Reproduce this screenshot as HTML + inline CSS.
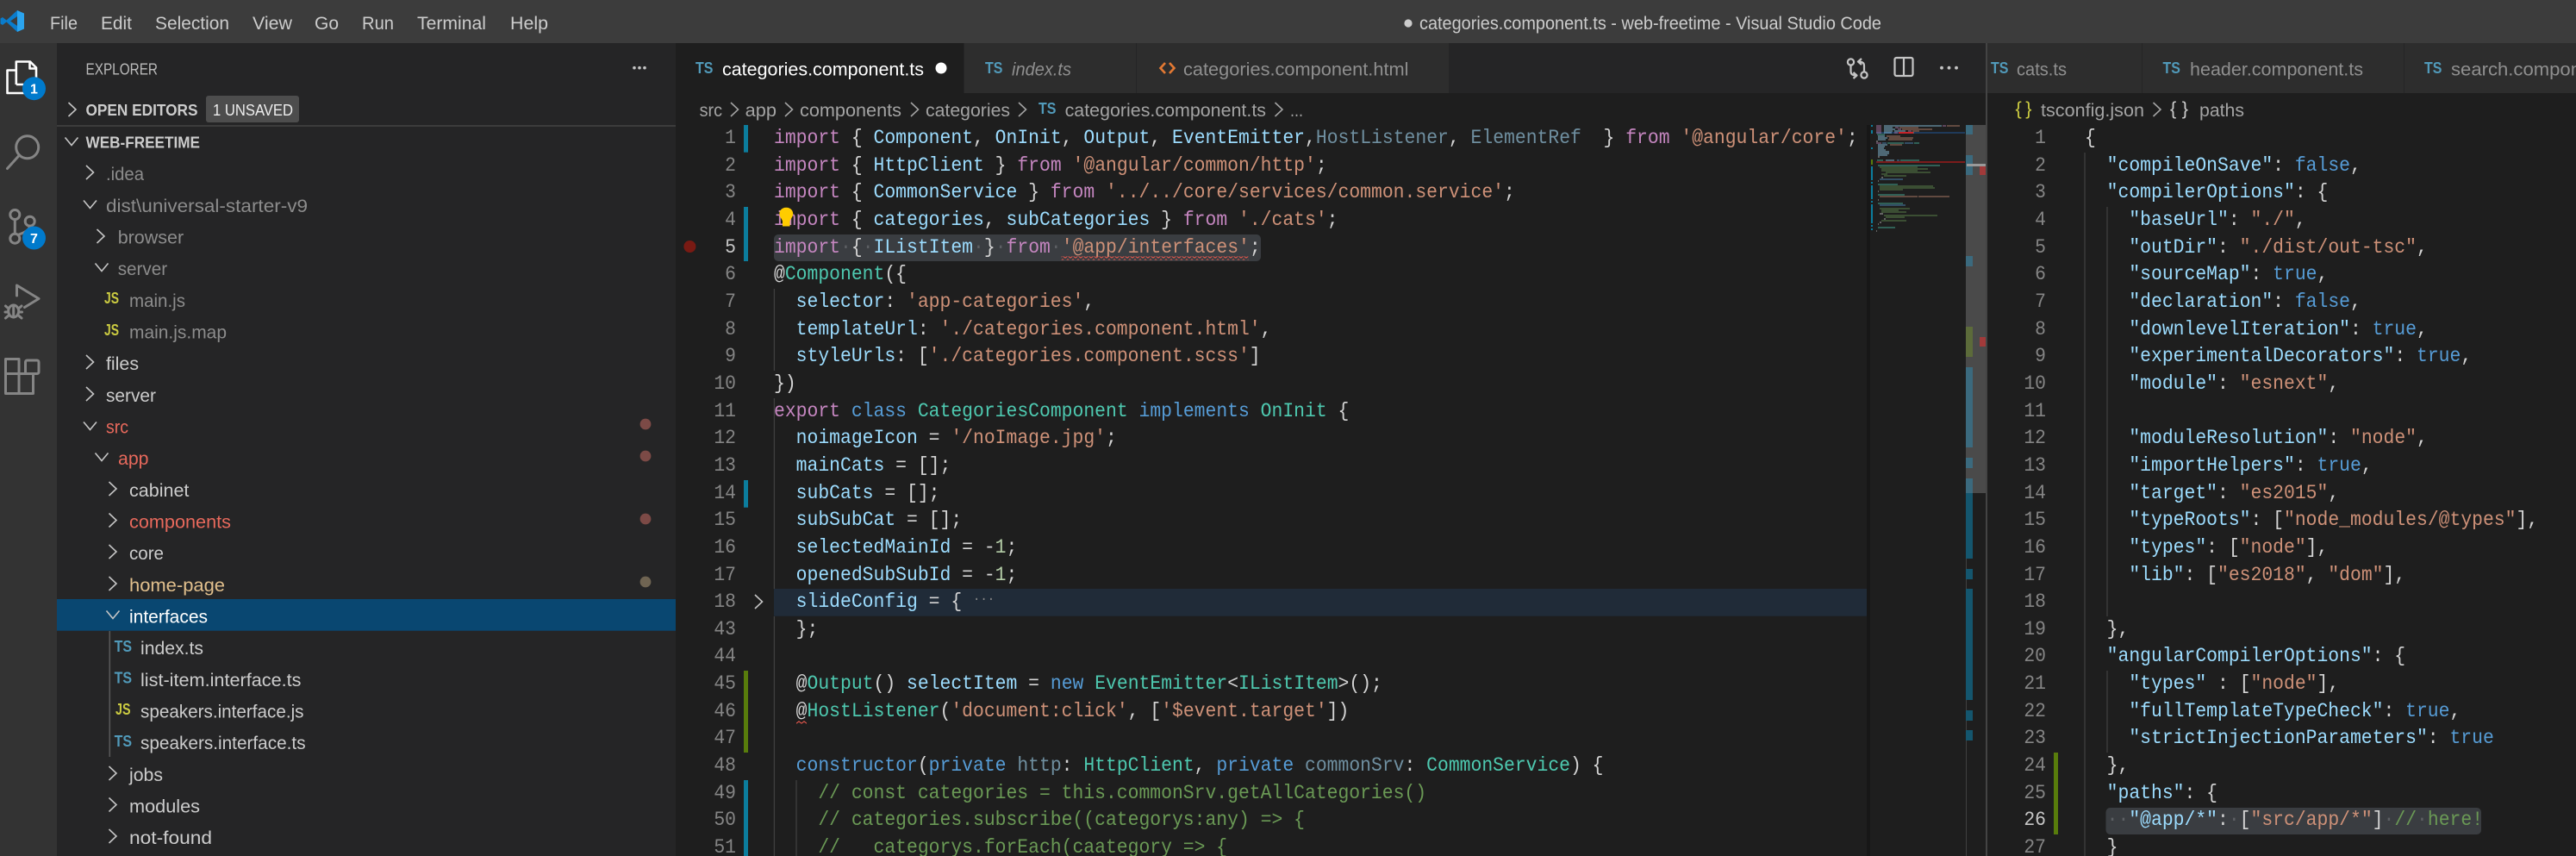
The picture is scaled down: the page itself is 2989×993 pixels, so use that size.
<!DOCTYPE html>
<html><head><meta charset="utf-8"><title>VS Code</title>
<style>
html,body{margin:0;padding:0;background:#1e1e1e;overflow:hidden;width:2989px;height:993px}
#p{position:relative;width:2989px;height:993px;overflow:hidden;background:#1e1e1e}
svg{position:absolute;left:0;top:0}
svg text{font-family:"Liberation Sans",sans-serif;font-size:21.67px;fill:#ccc}
text.h{font-size:18.33px}
text.b{font-size:18.33px;font-weight:bold}
text.d{fill:#8c8c8c}
text.e{fill:#e8695c}
text.y{fill:#e2c08d}
text.c{fill:#a3a3a3}
text.g{fill:#8f8f8f}
text.ts{font-size:18.5px;fill:#519aba;font-weight:bold}
text.js{font-size:18.5px;fill:#cbcb41;font-weight:bold}
.code,.num{position:absolute;font-family:"Liberation Mono",monospace;font-size:23px;line-height:31.67px;color:#d4d4d4;transform:scaleX(.9297)}
.code{transform-origin:0 0;top:145px;height:848px;overflow:hidden;width:1400px}
.code div,.num div{height:31.67px;white-space:pre}
.num{top:145px;height:848px;overflow:hidden;text-align:right;width:60px;color:#858585;transform-origin:100% 0}
.num .a{color:#c6c6c6}
.k{color:#c586c0}.b{color:#569cd6}.t{color:#4ec9b0}.v{color:#9cdcfe}.s{color:#ce9178}.c{color:#6a9955}.n{color:#b5cea8}.f{color:#6f8fa0}.w{color:#5c5f63}
</style></head><body><div id="p">
<svg width="2989" height="993" viewBox="0 0 2989 993" fill="none">
<defs>
<path id="r" d="M0 -8L8.5 0L0 8"/>
<path id="dn" d="M-7.5 -4.5L0 4.5L7.5 -4.5"/>
</defs>
<!-- regions -->
<rect width="2989" height="50" fill="#3c3c3c"/>
<rect y="50" width="66" height="943" fill="#333333"/>
<rect x="66" y="50" width="718" height="943" fill="#252526"/>
<rect x="784" y="50" width="2205" height="58" fill="#252526"/>
<rect x="784" y="50" width="334" height="58" fill="#1e1e1e"/>
<rect x="1119" y="50" width="199" height="58" fill="#2d2d2d"/>
<rect x="1319" y="50" width="362" height="58" fill="#2d2d2d"/>
<rect x="2306" y="50" width="179" height="58" fill="#2d2d2d"/>
<rect x="2486" y="50" width="303" height="58" fill="#2d2d2d"/>
<rect x="2790" y="50" width="199" height="58" fill="#2d2d2d"/>
<rect x="2304" y="50" width="2" height="943" fill="#444"/>
<!-- sidebar extras -->
<rect x="66" y="145" width="718" height="2" fill="#3c3c3c"/>
<rect x="66" y="695" width="718" height="36.7" fill="#094771"/>
<rect x="126.5" y="732" width="1.6" height="146" fill="#585858"/>
<rect x="239" y="111" width="108" height="31" rx="3" fill="#4d4d4d"/>
<circle cx="749" cy="492" r="6.4" fill="#7c4a46"/><circle cx="749" cy="529" r="6.4" fill="#7c4a46"/><circle cx="749" cy="602" r="6.4" fill="#7c4a46"/><circle cx="749" cy="675" r="6.4" fill="#6f6452"/>
<circle cx="736" cy="78.7" r="1.8" fill="#c5c5c5"/><circle cx="742" cy="78.7" r="1.8" fill="#c5c5c5"/><circle cx="748" cy="78.7" r="1.8" fill="#c5c5c5"/>
<!-- left editor decor -->
<rect x="898" y="683" width="1272" height="31.7" fill="#202b38"/>
<rect x="898" y="272" width="565" height="31" rx="5" fill="#3a3d41"/>
<rect x="863" y="145" width="5" height="31.7" fill="#0c7d9d"/>
<rect x="863" y="240" width="5" height="63" fill="#0c7d9d"/>
<rect x="863" y="557" width="5" height="31.7" fill="#0c7d9d"/>
<rect x="863" y="778" width="5" height="95" fill="#587c0c"/>
<rect x="863" y="905" width="5" height="88" fill="#0c7d9d"/>
<circle cx="800.4" cy="286" r="7" fill="#791a13"/>
<g stroke="#3f3f3f" stroke-width="1.3">
<path d="M898.4 335V430M898.4 462V683M898.4 715V993M924 905V993"/>
<path d="M2419 177V993M2445 240V715M2445 778V873"/>
</g>
<g stroke="#c5c5c5" stroke-width="1.6"><use href="#r" x="876" y="698"/></g>
<!-- minimap -->
<rect x="2166" y="145" width="4" height="848" fill="#171717"/>
<rect x="2177" y="153" width="103" height="2" fill="#1f3a5a"/>
<g stroke-width="1.3" opacity=".62">
<path stroke="#c586c0" d="M2177 146h6M2254 146h4M2177 148h6M2199 148h4M2177 150h6M2202 150h4M2177 152h6M2214 152h4M2177 154h6M2198 154h4M2177 166h6"/>
<path stroke="#9cdcfe" d="M2186 146h40M2226 146h27M2186 148h10M2186 150h13M2186 152h10M2198 152h13M2186 154h9M2179 158h8M2179 160h11M2179 162h9M2179 168h11M2179 170h8M2179 172h7M2179 174h9M2179 176h13M2179 178h13M2179 180h11M2188 186h10"/>
<path stroke="#ce9178" d="M2259 146h15M2204 148h22M2207 150h35M2219 152h8M2203 154h18M2189 158h16M2192 160h28M2191 162h28M2193 168h14M2181 228h44M2226 228h36"/>
<path stroke="#4ec9b0" d="M2178 156h9M2190 166h19M2221 166h6M2178 186h7M2205 186h22M2179 192h72M2179 214h23M2179 226h31M2179 236h29M2179 264h20"/>
<path stroke="#569cd6" d="M2184 166h5M2210 166h10M2201 186h3M2181 208h27M2181 238h30"/>
<path stroke="#6a9955" d="M2181 194h44M2183 196h54M2183 198h42M2188 200h52M2183 202h7M2186 204h26M2181 216h62M2181 218h64M2181 220h27M2181 242h35M2183 244h20M2183 246h29M2186 250h62M2188 252h22M2183 256h29"/>
<path stroke="#d4d4d4" d="M2177 164h2M2179 182h2M2183 206h2M2179 210h1M2179 222h1M2179 232h1M2181 248h4M2186 254h2M2181 258h2M2179 260h1M2177 268h1"/>
</g>
<rect x="2203" y="153" width="17" height="2" fill="#c8242b"/>
<rect x="2177" y="187" width="103" height="2" fill="#7c1c1c"/>
<g fill="#0c7d9d">
<rect x="2171" y="145" width="2" height="2"/><rect x="2171" y="151" width="2" height="4"/><rect x="2171" y="171" width="2" height="2"/><rect x="2171" y="193" width="2" height="16"/><rect x="2171" y="211" width="2" height="2"/><rect x="2171" y="215" width="2" height="16"/><rect x="2171" y="233" width="2" height="2"/><rect x="2171" y="237" width="2" height="22"/><rect x="2171" y="261" width="2" height="2"/><rect x="2171" y="265" width="2" height="2"/>
</g>
<rect x="2171" y="185" width="2" height="6" fill="#587c0c"/>
<!-- overview ruler -->
<rect x="2281" y="145" width="1" height="848" fill="#404040"/>
<rect x="2281" y="145" width="23" height="427" fill="#4a4a4a"/>
<g fill="#3b6a7e">
<rect x="2281" y="145" width="8" height="11"/><rect x="2281" y="180" width="8" height="23"/><rect x="2281" y="297" width="8" height="12"/><rect x="2281" y="426" width="8" height="93"/><rect x="2281" y="531" width="8" height="12"/><rect x="2281" y="555" width="8" height="17"/>
</g>
<rect x="2281" y="379" width="8" height="35" fill="#5c6b3a"/>
<g fill="#14566e">
<rect x="2281" y="572" width="8" height="76"/><rect x="2281" y="660" width="8" height="12"/><rect x="2281" y="683" width="8" height="129"/><rect x="2281" y="824" width="8" height="12"/><rect x="2281" y="847" width="8" height="12"/>
</g>
<rect x="2297" y="192" width="7" height="11" fill="#a13a3a"/><rect x="2297" y="391" width="7" height="11" fill="#a13a3a"/>
<rect x="2282" y="190" width="22" height="3" fill="#9a9a9a"/>
<!-- right editor decor -->
<rect x="2383" y="873" width="5" height="95" fill="#587c0c"/>
<rect x="2443.5" y="937" width="435.5" height="31" rx="5" fill="#3a3d41"/>
<!-- logo -->
<path d="M20 12L28 15.5V33.5L20 37Z" fill="#2ba4ee"/>
<path d="M20 12L7.5 23.5L3 20L.5 21.5V27.5L3 29L7.5 25.5L20 37V30L12 24.5L20 19Z" fill="#0a7ccc"/>
<!-- activity icons -->
<g stroke="#fff" stroke-width="2.6" stroke-linejoin="round"><path d="M18.8 98V71.5H35L42 78.5V98H18.8"/><path d="M34.5 71.5V79.5H42"/><path d="M18 81.5H8.5V108H38V98"/></g>
<g stroke="#858585" stroke-width="3" stroke-linecap="round">
<circle cx="31.7" cy="170.7" r="13"/><path d="M22.5 180L8.5 195.5"/>
<circle cx="17.3" cy="249" r="5.5"/><circle cx="34.7" cy="256.7" r="5.5"/><circle cx="17.3" cy="276.7" r="5.5"/><path d="M17.3 254.5V271M34.7 262Q34 268 22 272"/>
<path d="M19.5 343V331L45 346.5L28.5 356.5" stroke-linejoin="round"/>
<ellipse cx="15.7" cy="361" rx="6" ry="7"/><path d="M6.5 355L10 358M25 355L21.5 358M6 362H9.5M25.5 362H22M6.5 369L10 366M25 369L21.5 366M15.7 354V368"/>
<rect x="29.5" y="418" width="15.5" height="15.5" rx="2"/><path d="M6.5 416.5H22V456.5M6.5 416.5V456.5H38.5V433.5H6.5" stroke-linejoin="round"/>
</g>
<circle cx="39.5" cy="102.7" r="13.5" fill="#007acc"/><circle cx="39.5" cy="276" r="13.5" fill="#007acc"/>
<text class="b" x="39.5" y="108.5" text-anchor="middle" style="fill:#fff;font-size:16px">1</text>
<text class="b" x="39.5" y="281.8" text-anchor="middle" style="fill:#fff;font-size:16px">7</text>
<!-- menu + title -->
<g style="fill:#ccc">
<text x="58" y="34" textLength="32" lengthAdjust="spacingAndGlyphs">File</text>
<text x="117" y="34" textLength="36" lengthAdjust="spacingAndGlyphs">Edit</text>
<text x="180" y="34" textLength="86" lengthAdjust="spacingAndGlyphs">Selection</text>
<text x="293" y="34" textLength="46" lengthAdjust="spacingAndGlyphs">View</text>
<text x="365" y="34" textLength="28" lengthAdjust="spacingAndGlyphs">Go</text>
<text x="420" y="34" textLength="37" lengthAdjust="spacingAndGlyphs">Run</text>
<text x="484" y="34" textLength="80" lengthAdjust="spacingAndGlyphs">Terminal</text>
<text x="592" y="34" textLength="44" lengthAdjust="spacingAndGlyphs">Help</text>
<circle cx="1634" cy="27" r="4.6" fill="#ccc"/>
<text x="1647" y="34" textLength="536" lengthAdjust="spacingAndGlyphs">categories.component.ts - web-freetime - Visual Studio Code</text>
</g>
<!-- explorer headers -->
<text class="h" x="99.5" y="86.5" textLength="83.5" lengthAdjust="spacingAndGlyphs" style="fill:#bbb">EXPLORER</text>
<text class="b" x="99.5" y="134" textLength="130" lengthAdjust="spacingAndGlyphs">OPEN EDITORS</text>
<text class="h" x="247" y="134" textLength="93" lengthAdjust="spacingAndGlyphs" style="fill:#eee">1 UNSAVED</text>
<text class="b" x="99.5" y="171.5" textLength="132.5" lengthAdjust="spacingAndGlyphs">WEB-FREETIME</text>
<!-- chevrons sidebar -->
<g stroke="#c5c5c5" stroke-width="1.6">
<use href="#r" x="79.5" y="127"/><use href="#dn" x="83" y="164"/>
<use href="#r" x="100" y="200"/><use href="#dn" x="104.5" y="237"/>
<use href="#r" x="112.5" y="274"/><use href="#dn" x="118" y="310"/>
<use href="#r" x="100" y="420"/><use href="#r" x="100" y="457"/><use href="#dn" x="104.5" y="494"/>
<use href="#dn" x="118" y="530"/>
<use href="#r" x="126.5" y="567"/><use href="#r" x="126.5" y="603.5"/><use href="#r" x="126.5" y="640"/><use href="#r" x="126.5" y="677"/>
<use href="#dn" x="131" y="713"/>
<use href="#r" x="126.5" y="897"/><use href="#r" x="126.5" y="933.5"/><use href="#r" x="126.5" y="970"/>
</g>
<!-- tree -->
<text class="d" x="123" y="209.2" textLength="44" lengthAdjust="spacingAndGlyphs">.idea</text>
<text class="d" x="123" y="245.8" textLength="234" lengthAdjust="spacingAndGlyphs">dist\universal-starter-v9</text>
<text class="d" x="136.7" y="282.5" textLength="76.5" lengthAdjust="spacingAndGlyphs">browser</text>
<text class="d" x="136.7" y="319.2" textLength="57.5" lengthAdjust="spacingAndGlyphs">server</text>
<text class="js" x="121" y="352" textLength="17" lengthAdjust="spacingAndGlyphs">JS</text>
<text class="d" x="150" y="355.8" textLength="65" lengthAdjust="spacingAndGlyphs">main.js</text>
<text class="js" x="121" y="389" textLength="17" lengthAdjust="spacingAndGlyphs">JS</text>
<text class="d" x="150" y="392.5" textLength="113" lengthAdjust="spacingAndGlyphs">main.js.map</text>
<text x="123" y="429.2" textLength="38" lengthAdjust="spacingAndGlyphs">files</text>
<text x="123" y="465.8" textLength="58" lengthAdjust="spacingAndGlyphs">server</text>
<text class="e" x="123" y="502.5" textLength="26" lengthAdjust="spacingAndGlyphs">src</text>
<text class="e" x="137" y="539.2" textLength="35.5" lengthAdjust="spacingAndGlyphs">app</text>
<text x="150" y="575.8" textLength="69.4" lengthAdjust="spacingAndGlyphs">cabinet</text>
<text class="e" x="150" y="612.5" textLength="118" lengthAdjust="spacingAndGlyphs">components</text>
<text x="150" y="649.2" textLength="40" lengthAdjust="spacingAndGlyphs">core</text>
<text class="y" x="150" y="685.8" textLength="111" lengthAdjust="spacingAndGlyphs">home-page</text>
<text x="150" y="722.5" textLength="91" lengthAdjust="spacingAndGlyphs" style="fill:#fff">interfaces</text>
<text class="ts" x="132.6" y="756" textLength="20.4" lengthAdjust="spacingAndGlyphs">TS</text>
<text x="163" y="759.2" textLength="73" lengthAdjust="spacingAndGlyphs">index.ts</text>
<text class="ts" x="132.6" y="792.5" textLength="20.4" lengthAdjust="spacingAndGlyphs">TS</text>
<text x="163" y="795.8" textLength="186.5" lengthAdjust="spacingAndGlyphs">list-item.interface.ts</text>
<text class="js" x="134" y="829" textLength="17.5" lengthAdjust="spacingAndGlyphs">JS</text>
<text x="163" y="832.5" textLength="189.5" lengthAdjust="spacingAndGlyphs">speakers.interface.js</text>
<text class="ts" x="132.6" y="866" textLength="20.4" lengthAdjust="spacingAndGlyphs">TS</text>
<text x="163" y="869.2" textLength="191.6" lengthAdjust="spacingAndGlyphs">speakers.interface.ts</text>
<text x="150" y="905.8" textLength="39" lengthAdjust="spacingAndGlyphs">jobs</text>
<text x="150" y="942.5" textLength="82" lengthAdjust="spacingAndGlyphs">modules</text>
<text x="150" y="979.2" textLength="96" lengthAdjust="spacingAndGlyphs">not-found</text>
<!-- left tabs -->
<text class="ts" x="807" y="85" textLength="20.4" lengthAdjust="spacingAndGlyphs">TS</text>
<text x="838" y="87.5" textLength="234" lengthAdjust="spacingAndGlyphs" style="fill:#fff">categories.component.ts</text>
<circle cx="1092" cy="79" r="6.5" fill="#fff"/>
<text class="ts" x="1143" y="85" textLength="20.4" lengthAdjust="spacingAndGlyphs">TS</text>
<text class="g" x="1174" y="87.5" textLength="69" lengthAdjust="spacingAndGlyphs" font-style="italic">index.ts</text>
<path d="M1352 73L1346.5 79L1352 85M1357 73L1362.5 79L1357 85" stroke="#e37933" stroke-width="2.6"/>
<text class="g" x="1373" y="87.5" textLength="261.5" lengthAdjust="spacingAndGlyphs">categories.component.html</text>
<!-- editor actions -->
<g stroke="#c5c5c5" stroke-width="2.2" stroke-linejoin="round">
<circle cx="2147.5" cy="72" r="3.6"/><circle cx="2163" cy="87" r="3.6"/>
<path d="M2147.5 76V83Q2147.5 87.5 2154 87.5M2150.5 84L2154.5 87.5L2150.5 91"/>
<path d="M2163 83V76Q2163 71.5 2156.5 71.5M2160 68L2156 71.5L2160 75"/>
<rect x="2198.5" y="67" width="21" height="21" rx="2"/><path d="M2209 67V88"/>
</g>
<g fill="#c5c5c5"><circle cx="2253" cy="78.7" r="1.9"/><circle cx="2261.5" cy="78.7" r="1.9"/><circle cx="2270" cy="78.7" r="1.9"/></g>
<!-- left breadcrumbs -->
<text class="c" x="811.6" y="135" textLength="26.4" lengthAdjust="spacingAndGlyphs">src</text>
<text class="c" x="864.7" y="135" textLength="36.3" lengthAdjust="spacingAndGlyphs">app</text>
<text class="c" x="928" y="135" textLength="118" lengthAdjust="spacingAndGlyphs">components</text>
<text class="c" x="1074" y="135" textLength="98" lengthAdjust="spacingAndGlyphs">categories</text>
<text class="ts" x="1205" y="132" textLength="20.4" lengthAdjust="spacingAndGlyphs">TS</text>
<text class="c" x="1235.6" y="135" textLength="233.4" lengthAdjust="spacingAndGlyphs">categories.component.ts</text>
<text class="c" x="1497" y="135" textLength="15" lengthAdjust="spacingAndGlyphs">...</text>
<g stroke="#a3a3a3" stroke-width="1.6"><use href="#r" x="848" y="127"/><use href="#r" x="911" y="127"/><use href="#r" x="1057" y="127"/><use href="#r" x="1182" y="127"/><use href="#r" x="1479.5" y="127"/><use href="#r" x="2498.5" y="127"/></g>
<!-- right tabs -->
<text class="ts" x="2310" y="85" textLength="20.4" lengthAdjust="spacingAndGlyphs">TS</text>
<text class="g" x="2340" y="87.5" textLength="58" lengthAdjust="spacingAndGlyphs">cats.ts</text>
<text class="ts" x="2509.5" y="85" textLength="20.4" lengthAdjust="spacingAndGlyphs">TS</text>
<text class="g" x="2541" y="87.5" textLength="201" lengthAdjust="spacingAndGlyphs">header.component.ts</text>
<text class="ts" x="2813" y="85" textLength="20.4" lengthAdjust="spacingAndGlyphs">TS</text>
<text class="g" x="2844" y="87.5" textLength="205" lengthAdjust="spacingAndGlyphs">search.component.ts</text>
<!-- right breadcrumbs -->
<text x="2338.5" y="133" textLength="19" lengthAdjust="spacing" style="fill:#cbcb41">{}</text>
<text class="c" x="2368" y="135" textLength="120" lengthAdjust="spacingAndGlyphs">tsconfig.json</text>
<text x="2518" y="133" textLength="21" lengthAdjust="spacing" style="fill:#ccc">{}</text>
<text class="c" x="2552" y="135" textLength="52" lengthAdjust="spacingAndGlyphs">paths</text>
</svg>

<div class="num" style="left:794px"><div>1</div><div>2</div><div>3</div><div>4</div><div class="a">5</div><div>6</div><div>7</div><div>8</div><div>9</div><div>10</div><div>11</div><div>12</div><div>13</div><div>14</div><div>15</div><div>16</div><div>17</div><div>18</div><div>43</div><div>44</div><div>45</div><div>46</div><div>47</div><div>48</div><div>49</div><div>50</div><div>51</div></div>

<div class="code" style="left:898.4px"><div><span class="k">import</span> { <span class="v">Component</span>, <span class="v">OnInit</span>, <span class="v">Output</span>, <span class="v">EventEmitter</span>,<span class="f">HostListener</span>, <span class="f">ElementRef</span>  } <span class="k">from</span> <span class="s">'@angular/core'</span>;</div>
<div><span class="k">import</span> { <span class="v">HttpClient</span> } <span class="k">from</span> <span class="s">'@angular/common/http'</span>;</div>
<div><span class="k">import</span> { <span class="v">CommonService</span> } <span class="k">from</span> <span class="s">'../../core/services/common.service'</span>;</div>
<div><span class="k">import</span> { <span class="v">categories</span>, <span class="v">subCategories</span> } <span class="k">from</span> <span class="s">'./cats'</span>;</div>
<div><span class="k">import</span><span class="w">·</span>{<span class="w">·</span><span class="v">IListItem</span><span class="w">·</span>}<span class="w">·</span><span class="k">from</span><span class="w">·</span><span class="s">'@app/interfaces'</span>;</div>
<div>@<span class="t">Component</span>({</div>
<div>  <span class="v">selector</span>: <span class="s">'app-categories'</span>,</div>
<div>  <span class="v">templateUrl</span>: <span class="s">'./categories.component.html'</span>,</div>
<div>  <span class="v">styleUrls</span>: [<span class="s">'./categories.component.scss'</span>]</div>
<div>})</div>
<div><span class="k">export</span> <span class="b">class</span> <span class="t">CategoriesComponent</span> <span class="b">implements</span> <span class="t">OnInit</span> {</div>
<div>  <span class="v">noimageIcon</span> = <span class="s">'/noImage.jpg'</span>;</div>
<div>  <span class="v">mainCats</span> = [];</div>
<div>  <span class="v">subCats</span> = [];</div>
<div>  <span class="v">subSubCat</span> = [];</div>
<div>  <span class="v">selectedMainId</span> = -<span class="n">1</span>;</div>
<div>  <span class="v">openedSubSubId</span> = -<span class="n">1</span>;</div>
<div>  <span class="v">slideConfig</span> = { <span style="color:#8a8a8a;font-size:15px;position:relative;top:-5px">···</span></div>
<div>  };</div>
<div> </div>
<div>  @<span class="t">Output</span>() <span class="v">selectItem</span> = <span class="b">new</span> <span class="t">EventEmitter</span>&lt;<span class="t">IListItem</span>&gt;();</div>
<div>  @<span class="t">HostListener</span>(<span class="s">'document:click'</span>, [<span class="s">'$event.target'</span>])</div>
<div> </div>
<div>  <span class="b">constructor</span>(<span class="b">private</span> <span class="f">http</span>: <span class="t">HttpClient</span>, <span class="b">private</span> <span class="f">commonSrv</span>: <span class="t">CommonService</span>) {</div>
<div>    <span class="c">// const categories = this.commonSrv.getAllCategories()</span></div>
<div>    <span class="c">// categories.subscribe((categorys:any) =&gt; {</span></div>
<div>    <span class="c">//   categorys.forEach(caategory =&gt; {</span></div></div>

<div class="num" style="left:2314px"><div>1</div><div>2</div><div>3</div><div>4</div><div>5</div><div>6</div><div>7</div><div>8</div><div>9</div><div>10</div><div>11</div><div>12</div><div>13</div><div>14</div><div>15</div><div>16</div><div>17</div><div>18</div><div>19</div><div>20</div><div>21</div><div>22</div><div>23</div><div>24</div><div>25</div><div class="a">26</div><div>27</div></div>

<div class="code" style="left:2419px;width:640px"><div>{</div>
<div>  <span class="v">"compileOnSave"</span>: <span class="b">false</span>,</div>
<div>  <span class="v">"compilerOptions"</span>: {</div>
<div>    <span class="v">"baseUrl"</span>: <span class="s">"./"</span>,</div>
<div>    <span class="v">"outDir"</span>: <span class="s">"./dist/out-tsc"</span>,</div>
<div>    <span class="v">"sourceMap"</span>: <span class="b">true</span>,</div>
<div>    <span class="v">"declaration"</span>: <span class="b">false</span>,</div>
<div>    <span class="v">"downlevelIteration"</span>: <span class="b">true</span>,</div>
<div>    <span class="v">"experimentalDecorators"</span>: <span class="b">true</span>,</div>
<div>    <span class="v">"module"</span>: <span class="s">"esnext"</span>,</div>
<div> </div>
<div>    <span class="v">"moduleResolution"</span>: <span class="s">"node"</span>,</div>
<div>    <span class="v">"importHelpers"</span>: <span class="b">true</span>,</div>
<div>    <span class="v">"target"</span>: <span class="s">"es2015"</span>,</div>
<div>    <span class="v">"typeRoots"</span>: [<span class="s">"node_modules/@types"</span>],</div>
<div>    <span class="v">"types"</span>: [<span class="s">"node"</span>],</div>
<div>    <span class="v">"lib"</span>: [<span class="s">"es2018"</span>, <span class="s">"dom"</span>],</div>
<div> </div>
<div>  },</div>
<div>  <span class="v">"angularCompilerOptions"</span>: {</div>
<div>    <span class="v">"types"</span> : [<span class="s">"node"</span>],</div>
<div>    <span class="v">"fullTemplateTypeCheck"</span>: <span class="b">true</span>,</div>
<div>    <span class="v">"strictInjectionParameters"</span>: <span class="b">true</span></div>
<div>  },</div>
<div>  <span class="v">"paths"</span>: {</div>
<div>  <span class="w">··</span><span class="v">"@app/*"</span>:<span class="w">·</span>[<span class="s">"src/app/*"</span>]<span class="w">·</span><span class="c">//</span><span class="w">·</span><span class="c">here!</span></div>
<div>  }</div></div>

<svg width="2989" height="993" viewBox="0 0 2989 993" fill="none">
<defs><pattern id="sq" width="6" height="4" patternUnits="userSpaceOnUse"><path d="M0 3.2L3 .8L6 3.2" stroke="#e8574c" stroke-width="1.1" fill="none"/></pattern></defs>
<rect x="1231.5" y="297.5" width="217" height="4" fill="url(#sq)"/>
<rect x="924" y="836" width="12" height="4" fill="url(#sq)"/>
<path d="M912.3 240.8C906.5 240.8 904.4 245 904.4 248C904.4 251.5 907 253.5 908 256.5V262.5H916.5V256.5C917.5 253.5 920.2 251.5 920.2 248C920.2 245 918 240.8 912.3 240.8Z" fill="#ffcc00"/>
</svg>
</div></body></html>
